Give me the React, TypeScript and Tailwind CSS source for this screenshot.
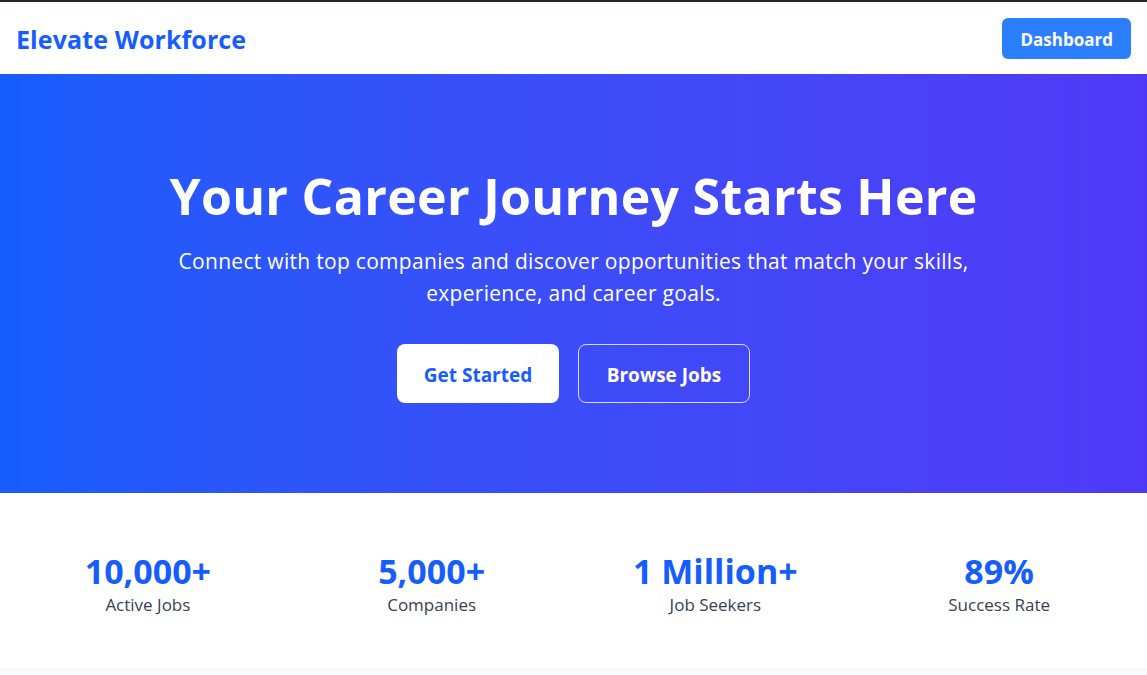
const stats = [
  { value: "10,000+", label: "Active Jobs" },
  { value: "5,000+", label: "Companies" },
  { value: "1 Million+", label: "Job Seekers" },
  { value: "89%", label: "Success Rate" },
];

const App = () => {
  return (
    <div className="min-h-screen bg-gray-50 font-['Open_Sans',_'Noto_Sans',_sans-serif]">
      {/* Navbar */}
      <nav className="h-[74px] border-t-2 border-[#1f2b2d] bg-white flex items-center justify-between px-4">
        <a href="#" className="mt-[3px] text-[25px] font-bold text-blue-600 tracking-[0.1px]">
          Elevate Workforce
        </a>
        <button className="h-[41px] px-[18px] pt-[3px] rounded-md bg-blue-500 text-white font-bold text-[17px]">
          Dashboard
        </button>
      </nav>

      {/* Hero */}
      <section className="bg-gradient-to-r from-blue-600 to-indigo-600 pt-[97px] pb-[90px] px-6 text-center text-white">
        <h1 className="text-[50px] leading-none font-bold tracking-[0.3px] mb-6">
          Your Career Journey Starts Here
        </h1>
        <p className="text-[21px] leading-8 max-w-[820px] mx-auto tracking-[0.3px]">
          Connect with top companies and discover opportunities that match your skills, experience, and career goals.
        </p>
        <div className="mt-[35px] flex justify-center gap-[19px]">
          <button className="h-[59px] w-[162px] pt-[3px] rounded-lg bg-white text-blue-600 text-[19px] font-bold">
            Get Started
          </button>
          <button className="h-[59px] w-[172px] pt-[3px] rounded-lg border border-white/80 text-white text-[19px] font-bold">
            Browse Jobs
          </button>
        </div>
      </section>

      {/* Stats */}
      <section className="bg-white pt-[56px] pb-[51px] px-[6px]">
        <div className="grid grid-cols-4">
          {stats.map((s) => (
            <div key={s.label} className="text-center">
              <div className="text-[34px] leading-[44px] font-bold text-blue-600">{s.value}</div>
              <div className="text-[17px] leading-6 text-gray-700">{s.label}</div>
            </div>
          ))}
        </div>
      </section>
    </div>
  );
};

export default App;
